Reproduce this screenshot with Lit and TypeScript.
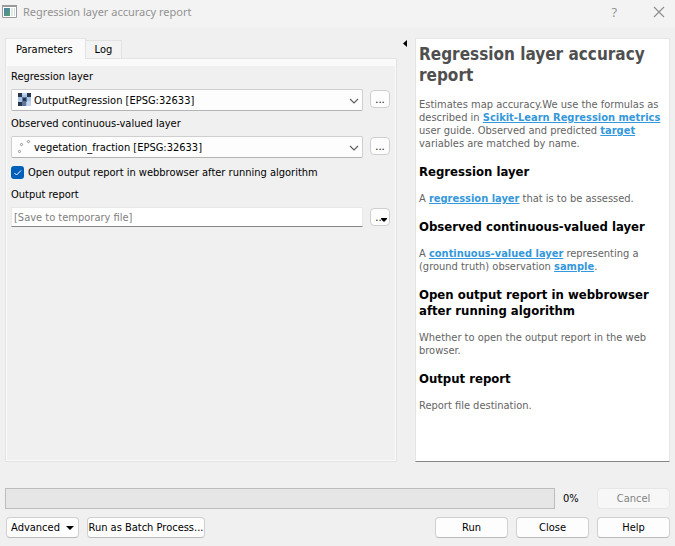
import { LitElement, html, css } from "lit";
import { customElement } from "lit/decorators.js";

const rasterIcon = html`<svg class="layer-icon" width="13" height="13" viewBox="0 0 13 13" shape-rendering="crispEdges" aria-hidden="true">
  <path fill="#a9c3e4" d="M0 0h13v13H0z"/>
  <path fill="#26364d" d="M0 0h4v4H0zM9 0h4v4H9zM5 5h3v3H5zM0 9h4v4H0z"/>
  <path fill="#c3d5ec" d="M4 0h5v2H4zM9 8h4v5H9z"/>
  <path fill="#5c7699" d="M4 4h1v5H4zM8 4h1v5H8zM5 4h3v1H5zM5 8h3v1H5zM4 9h4v4H4z"/>
</svg>`;

const pointsIcon = html`<svg class="layer-icon" width="14" height="14" viewBox="0 0 14 14" fill="#fff" stroke="#8a8a8a" stroke-width=".9" aria-hidden="true">
  <circle cx="1.5" cy="11.500" r="1.1"/><circle cx="3.500" cy="4.500" r="1.1"/><circle cx="10.500" cy="1.600" r="1.1"/>
</svg>`;

const chevron = html`<svg class="chevron" width="10" height="6" viewBox="0 0 10 6" fill="none" stroke="#5c5c5c" stroke-width="1.1" aria-hidden="true">
  <path d="M1 1l4 4 4-4"/>
</svg>`;

@customElement("app-root")
export class AppRoot extends LitElement {
  static styles = css`
    :host {
      display: flex;
      flex-direction: column;
      min-height: 100vh;
      box-sizing: border-box;
      background: #f0f0f0;
      color: #000;
      font: 11px/13px "DejaVu Sans Condensed", "DejaVu Sans", sans-serif;
    }
    * { box-sizing: border-box; }
    button, input, select { font: inherit; color: inherit; margin: 0; }
    button { padding: 0; }
    .titlebar {
      display: flex;
      align-items: center;
      height: 27px;
      padding: 0 10px 4px 2px;
      background: #f3f3f3;
      color: #929292;
    }
    .title {
      flex: 1;
      margin: 0 0 0 6px;
      font: 11px/16px "Noto Sans", sans-serif;
    }
    .caption {
      display: flex;
      border: 0;
      background: none;
      font: 13px/16px "Open Sans", sans-serif;
    }
    .caption + .caption { margin-left: 36px; }
    .main {
      flex: 1;
      display: grid;
      grid-template-columns: 392fr 18px 255fr;
      padding: 11px 5px 0;
    }
    .left {
      min-width: 0;
      display: flex;
      flex-direction: column;
    }
    .tabs { display: flex; align-items: flex-end; height: 20px; }
    .tab {
      height: 18px;
      border: 1px solid #e3e3e3;
      border-left: 0;
      border-bottom: 0;
      background: #f3f3f3;
      padding: 0 9px;
    }
    .tab.active {
      height: 21px;
      margin-bottom: -1px;
      border-left: 1px solid #e3e3e3;
      background: #fafafa;
      padding: 0 12px 0 10px;
      z-index: 1;
    }
    .panel {
      flex: 1;
      border: 1px solid #e3e3e3;
      padding: 1px;
      padding-top: 7px;
      background: #fafafa;
      display: flex;
    }
    form {
      flex: 1;
      min-width: 0;
      background: #f0f0f0;
      padding: 4px 5px 0 4px;
    }
    .label { display: block; height: 19px; line-height: 14px; }
    .row { display: flex; align-items: flex-start; gap: 7px; margin-bottom: 6px; }
    .field { position: relative; flex: 1; min-width: 0; display: flex; }
    select {
      appearance: none;
      width: 100%;
      height: 22px;
      border: 1px solid #cfcfcf;
      border-bottom-color: #b4b4b4;
      border-radius: 2px;
      background: #fdfdfd;
      padding: 0 20px 0 22px;
    }
    .layer-icon { position: absolute; left: 7px; top: 4px; }
    .chevron { position: absolute; right: 4px; top: 9px; }
    .browse {
      width: 20px;
      height: 18px;
      margin-top: 1px;
      border: 1px solid #cfcfcf;
      border-radius: 4px;
      background: #fdfdfd;
      display: flex;
      align-items: center;
      justify-content: center;
    }
    .menu { position: relative; }
    .menu svg { position: absolute; right: 2px; bottom: 3px; }
    .check { display: flex; align-items: center; gap: 4px; height: 17px; margin-bottom: 7px; }
    .check input {
      appearance: none;
      width: 13px;
      height: 13px;
      border-radius: 3px;
      background: #005fb8;
    }
    .box { position: relative; display: flex; }
    .box svg { position: absolute; left: 3px; top: 4px; pointer-events: none; }
    .path {
      width: 100%;
      height: 20px;
      border: 1px solid #e8e8e8;
      border-bottom: 1px solid #868686;
      background: #fff;
      padding: 0 2px;
      border-radius: 1px;
    }
    .path::placeholder { color: #808080; opacity: 1; }
    .splitter { border: 0; background: none; display: flex; padding: 2px 0 0 6px; }
    .help {
      min-width: 0;
      background: #fff;
      border: 1px solid #e6e6e6;
      border-bottom-color: #868686;
      padding: 5px 3px;
      color: #646464;
    }
    .help h1 { margin: 0 0 12px; font-size: 17px; line-height: 21px; color: #4f4f4f; }
    .help h2 { margin: 14px 0 12px; font-size: 13px; line-height: 16px; color: #000; }
    .help p { margin: 0; }
    .help a { color: #3498db; font-weight: bold; }
    .footer { padding: 26px 5px 8px; }
    .line { display: flex; align-items: center; gap: 8px; height: 21px; }
    .line + .line { margin-top: 8px; padding-left: 1px; }
    .progress { flex: 1; height: 21px; background: #e6e6e6; border: 1px solid #bcbcbc; }
    .percent { width: 26px; }
    .btn {
      width: 73px;
      height: 21px;
      border: 1px solid #d0d0d0;
      border-bottom-color: #bababa;
      border-radius: 4px;
      background: #fdfdfd;
      white-space: nowrap;
    }
    .btn:disabled { color: #838383; background: #f7f7f7; border-color: #e6e6e6; }
    .btn.wide { width: 118px; }
    .advanced { display: flex; align-items: center; justify-content: center; gap: 6px; }
    .space { flex: 1; }
  `;

  render() {
    return html`
      <header class="titlebar">
        <svg width="15" height="13" viewBox="0 0 15 13" aria-hidden="true">
          <defs><linearGradient id="g" x2="1" y2="1"><stop stop-color="#4b7fb0"/><stop offset="1" stop-color="#52a36b"/></linearGradient></defs>
          <path fill="#fff" stroke="#9a9a9a" d="M.5.5h14v12H.5z"/>
          <path fill="#9a9a9a" d="M0 0h15v2H0z"/>
          <path fill="url(#g)" d="M2 3h6v8H2z"/>
          <path fill="#dfe8e6" d="M9 3h2v8H9z"/><path fill="#c9dbd6" d="M12 3h1v8h-1z"/>
        </svg>
        <h1 class="title">Regression layer accuracy report</h1>
        <button class="caption" aria-label="Context help">?</button>
        <button class="caption" aria-label="Close window">
          <svg width="12" height="12" viewBox="0 0 12 12" stroke="#8c8c8c" stroke-width="1.1"><path d="M1 1l10 10M11 1L1 11"/></svg>
        </button>
      </header>
      <main class="main">
        <section class="left">
          <div class="tabs" role="tablist">
            <button class="tab active" role="tab" aria-selected="true">Parameters</button>
            <button class="tab" role="tab" aria-selected="false">Log</button>
          </div>
          <div class="panel" role="tabpanel">
            <form>
              <label class="label" for="regression">Regression layer</label>
              <div class="row">
                <div class="field">
                  <select id="regression"><option>OutputRegression [EPSG:32633]</option></select>
                  ${rasterIcon}${chevron}
                </div>
                <button type="button" class="browse" aria-label="Browse regression layer">...</button>
              </div>
              <label class="label" for="observed">Observed continuous-valued layer</label>
              <div class="row">
                <div class="field">
                  <select id="observed"><option>vegetation_fraction [EPSG:32633]</option></select>
                  ${pointsIcon}${chevron}
                </div>
                <button type="button" class="browse" aria-label="Browse observed layer">...</button>
              </div>
              <label class="check">
                <span class="box"><input type="checkbox" checked>
                  <svg width="8" height="6" viewBox="0 0 8 6" fill="none" stroke="#fff"><path d="M.5 3l2 2 4.500-4.500"/></svg>
                </span>
                Open output report in webbrowser after running algorithm
              </label>
              <label class="label" for="report">Output report</label>
              <div class="row">
                <div class="field"><input class="path" id="report" type="text" placeholder="[Save to temporary file]"></div>
                <button type="button" class="browse menu" aria-label="Choose output report">...<svg width="6" height="4" viewBox="0 0 6 4" aria-hidden="true"><path d="M0 0h6v1L3 4 0 1z"/></svg></button>
              </div>
            </form>
          </div>
        </section>
        <button class="splitter" aria-label="Collapse help">
          <svg width="4" height="7" viewBox="0 0 4 7"><path d="M4 0v7L0 3.500z"/></svg>
        </button>
        <article class="help">
          <h1>Regression layer accuracy report</h1>
          <p>Estimates map accuracy.We use the formulas as described in <a href="#metrics">Scikit-Learn Regression metrics</a> user guide. Observed and predicted <a href="#target">target</a> variables are matched by name.</p>
          <h2>Regression layer</h2>
          <p>A <a href="#regression-layer">regression layer</a> that is to be assessed.</p>
          <h2>Observed continuous-valued layer</h2>
          <p>A <a href="#continuous">continuous-valued layer</a> representing a (ground truth) observation <a href="#sample">sample</a>.</p>
          <h2>Open output report in webbrowser after running algorithm</h2>
          <p>Whether to open the output report in the web browser.</p>
          <h2>Output report</h2>
          <p>Report file destination.</p>
        </article>
      </main>
      <footer class="footer">
        <div class="line">
          <div class="progress" role="progressbar" aria-label="Progress" aria-valuenow="0"></div>
          <span class="percent">0%</span>
          <button class="btn" disabled>Cancel</button>
        </div>
        <div class="line">
          <button class="btn advanced">Advanced <svg width="8" height="4" viewBox="0 0 8 4" aria-hidden="true"><path d="M0 0h8L4 4z"/></svg></button>
          <button class="btn wide">Run as Batch Process...</button>
          <span class="space"></span>
          <button class="btn">Run</button>
          <button class="btn">Close</button>
          <button class="btn">Help</button>
        </div>
      </footer>
    `;
  }
}
